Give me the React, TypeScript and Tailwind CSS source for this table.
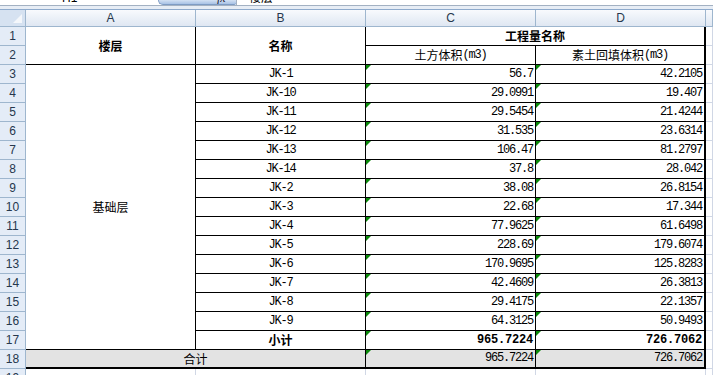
import React from "react";

// ---------------- DATA ----------------
const rows: [string, string, string][] = [
  ["JK-1", "56.7", "42.2105"],
  ["JK-10", "29.0991", "19.407"],
  ["JK-11", "29.5454", "21.4244"],
  ["JK-12", "31.535", "23.6314"],
  ["JK-13", "106.47", "81.2797"],
  ["JK-14", "37.8", "28.042"],
  ["JK-2", "38.08", "26.8154"],
  ["JK-3", "22.68", "17.344"],
  ["JK-4", "77.9625", "61.6498"],
  ["JK-5", "228.69", "179.6074"],
  ["JK-6", "170.9695", "125.8283"],
  ["JK-7", "42.4609", "26.3813"],
  ["JK-8", "29.4175", "22.1357"],
  ["JK-9", "64.3125", "50.9493"],
];

const cjk = "font-['Noto_Sans_CJK_SC',sans-serif] text-[12px] text-black";
const mono = "font-['Liberation_Mono','Noto_Sans_CJK_SC',monospace] text-[12px] tracking-[-1.2px] text-black";
const monoBold = "font-['Liberation_Mono','Noto_Sans_CJK_SC',monospace] text-[12px] tracking-[-0.2px] font-bold text-black";

// ---------------- PIECES ----------------
function RowHead({ n }: { n: number }) {
  return (
    <div className="flex items-center justify-center bg-[#e4ecf7] border-r border-b border-[#9eb6ce] font-['Liberation_Sans',Arial,sans-serif] text-[12px] text-[#26374d] leading-none">
      {n}
    </div>
  );
}

function ColHead({ label }: { label: string }) {
  return (
    <div className="flex items-center justify-center bg-gradient-to-b from-[#f8fafd] to-[#dfe7f2] border-r border-b border-[#9eb6ce] font-['Liberation_Sans',Arial,sans-serif] text-[12px] text-[#26374d] leading-none">
      {label}
    </div>
  );
}

function Flag() {
  return <span className="absolute left-0 top-0 w-0 h-0 border-t-[5px] border-r-[5px] border-t-[#0a8a0a] border-r-transparent" />;
}

function Num({ v, bold, last, gray }: { v: string; bold?: boolean; last?: boolean; gray?: boolean }) {
  return (
    <div
      className={
        "relative flex items-end justify-end pr-[2px] pb-[2px] border-b border-black leading-[14px] " +
        (last ? "border-r-2 " : "border-r ") +
        (gray ? "bg-[#e3e3e3] border-b-2 " : "bg-white ") +
        (bold ? monoBold : mono)
      }
    >
      <Flag />
      {v}
    </div>
  );
}

function Blank() {
  return <div className="bg-white border-r border-b border-[#d0d7e5]" />;
}

// ========== SHEET ==========
export default function App() {
  return (
    <div className="w-[713px] h-[375px] overflow-hidden bg-white select-none">
      {/* FORMULA BAR (cut off) */}
      <div className="h-[10px] flex flex-col">
        <div className="h-[6px] flex overflow-hidden border-b border-[#a3b1c2]">
          <div className="w-[158px] bg-white relative overflow-hidden">
            <span className="absolute left-[62px] top-[-9px] font-['Liberation_Sans',Arial,sans-serif] text-[12px] leading-[14px] text-black">
              H1
            </span>
          </div>
          <div className="w-[78px] bg-gradient-to-b from-[#d3e1f3] to-[#a8c2e5] rounded-bl-[9px] rounded-br-[3px] relative overflow-hidden border-b border-l border-[#7f9cc4]">
            <span className="absolute left-[58px] top-[-9px] font-['Liberation_Serif',serif] italic text-[12px] leading-[14px] text-[#223]">
              fx
            </span>
          </div>
          <div className="flex-1 bg-white relative overflow-hidden border-l border-[#a3b1c2]">
            <span className={"absolute left-[12px] top-[-10px] leading-[14px] " + cjk}>楼层</span>
          </div>
        </div>
        <div className="flex-1 bg-[#e7edf5] border-b border-[#8eaacc]" />
      </div>

      {/* GRID */}
      <div className="grid grid-cols-[26px_170px_170px_170px_170px_1fr] grid-rows-[17px_repeat(19,19px)]">
        {/* header row */}
        <div className="relative bg-[#d6e2f1] border-r border-b border-[#9eb6ce]">
          <svg className="absolute right-[3px] bottom-[3px]" width="9" height="9" viewBox="0 0 9 9">
            <path d="M9 0 L9 9 L0 9 Z" fill="#f4f7fb" />
          </svg>
        </div>
        <ColHead label="A" />
        <ColHead label="B" />
        <ColHead label="C" />
        <ColHead label="D" />
        <ColHead label="" />

        {/* row 1 */}
        <RowHead n={1} />
        <div className={"row-span-2 flex items-center justify-center font-bold border-r border-b border-black " + cjk}>楼层</div>
        <div className={"row-span-2 flex items-center justify-center font-bold border-r border-b border-black " + cjk}>名称</div>
        <div className={"col-span-2 flex items-center justify-center font-bold border-r-2 border-b border-black " + cjk}>工程量名称</div>
        <Blank />

        {/* row 2 */}
        <RowHead n={2} />
        <div className={"flex items-center justify-center border-r border-b border-black " + cjk}>
          土方体积<span className={mono}>(m3)</span>
        </div>
        <div className={"flex items-center justify-center border-r-2 border-b border-black " + cjk}>
          素土回填体积<span className={mono}>(m3)</span>
        </div>
        <Blank />

        {/* rows 3-16 */}
        {rows.map((r, i) => (
          <React.Fragment key={r[0]}>
            <RowHead n={i + 3} />
            {i === 0 && (
              <div className={"row-span-15 flex items-center justify-center border-r border-b border-black " + cjk}>基础层</div>
            )}
            <div className={"flex items-end justify-center pb-[2px] leading-[14px] border-r border-b border-black " + mono}>{r[0]}</div>
            <Num v={r[1]} />
            <Num v={r[2]} last />
            <Blank />
          </React.Fragment>
        ))}

        {/* row 17 */}
        <RowHead n={17} />
        <div className={"flex items-center justify-center font-bold border-r border-b border-black " + cjk}>小计</div>
        <Num v="965.7224" bold />
        <Num v="726.7062" bold last />
        <Blank />

        {/* row 18 */}
        <RowHead n={18} />
        <div className={"col-span-2 flex items-center justify-center bg-[#e3e3e3] border-r border-b-2 border-black " + cjk}>合计</div>
        <Num v="965.7224" gray />
        <Num v="726.7062" gray last />
        <Blank />

        {/* row 19 */}
        <RowHead n={19} />
        <Blank />
        <Blank />
        <Blank />
        <Blank />
        <Blank />
      </div>
    </div>
  );
}
